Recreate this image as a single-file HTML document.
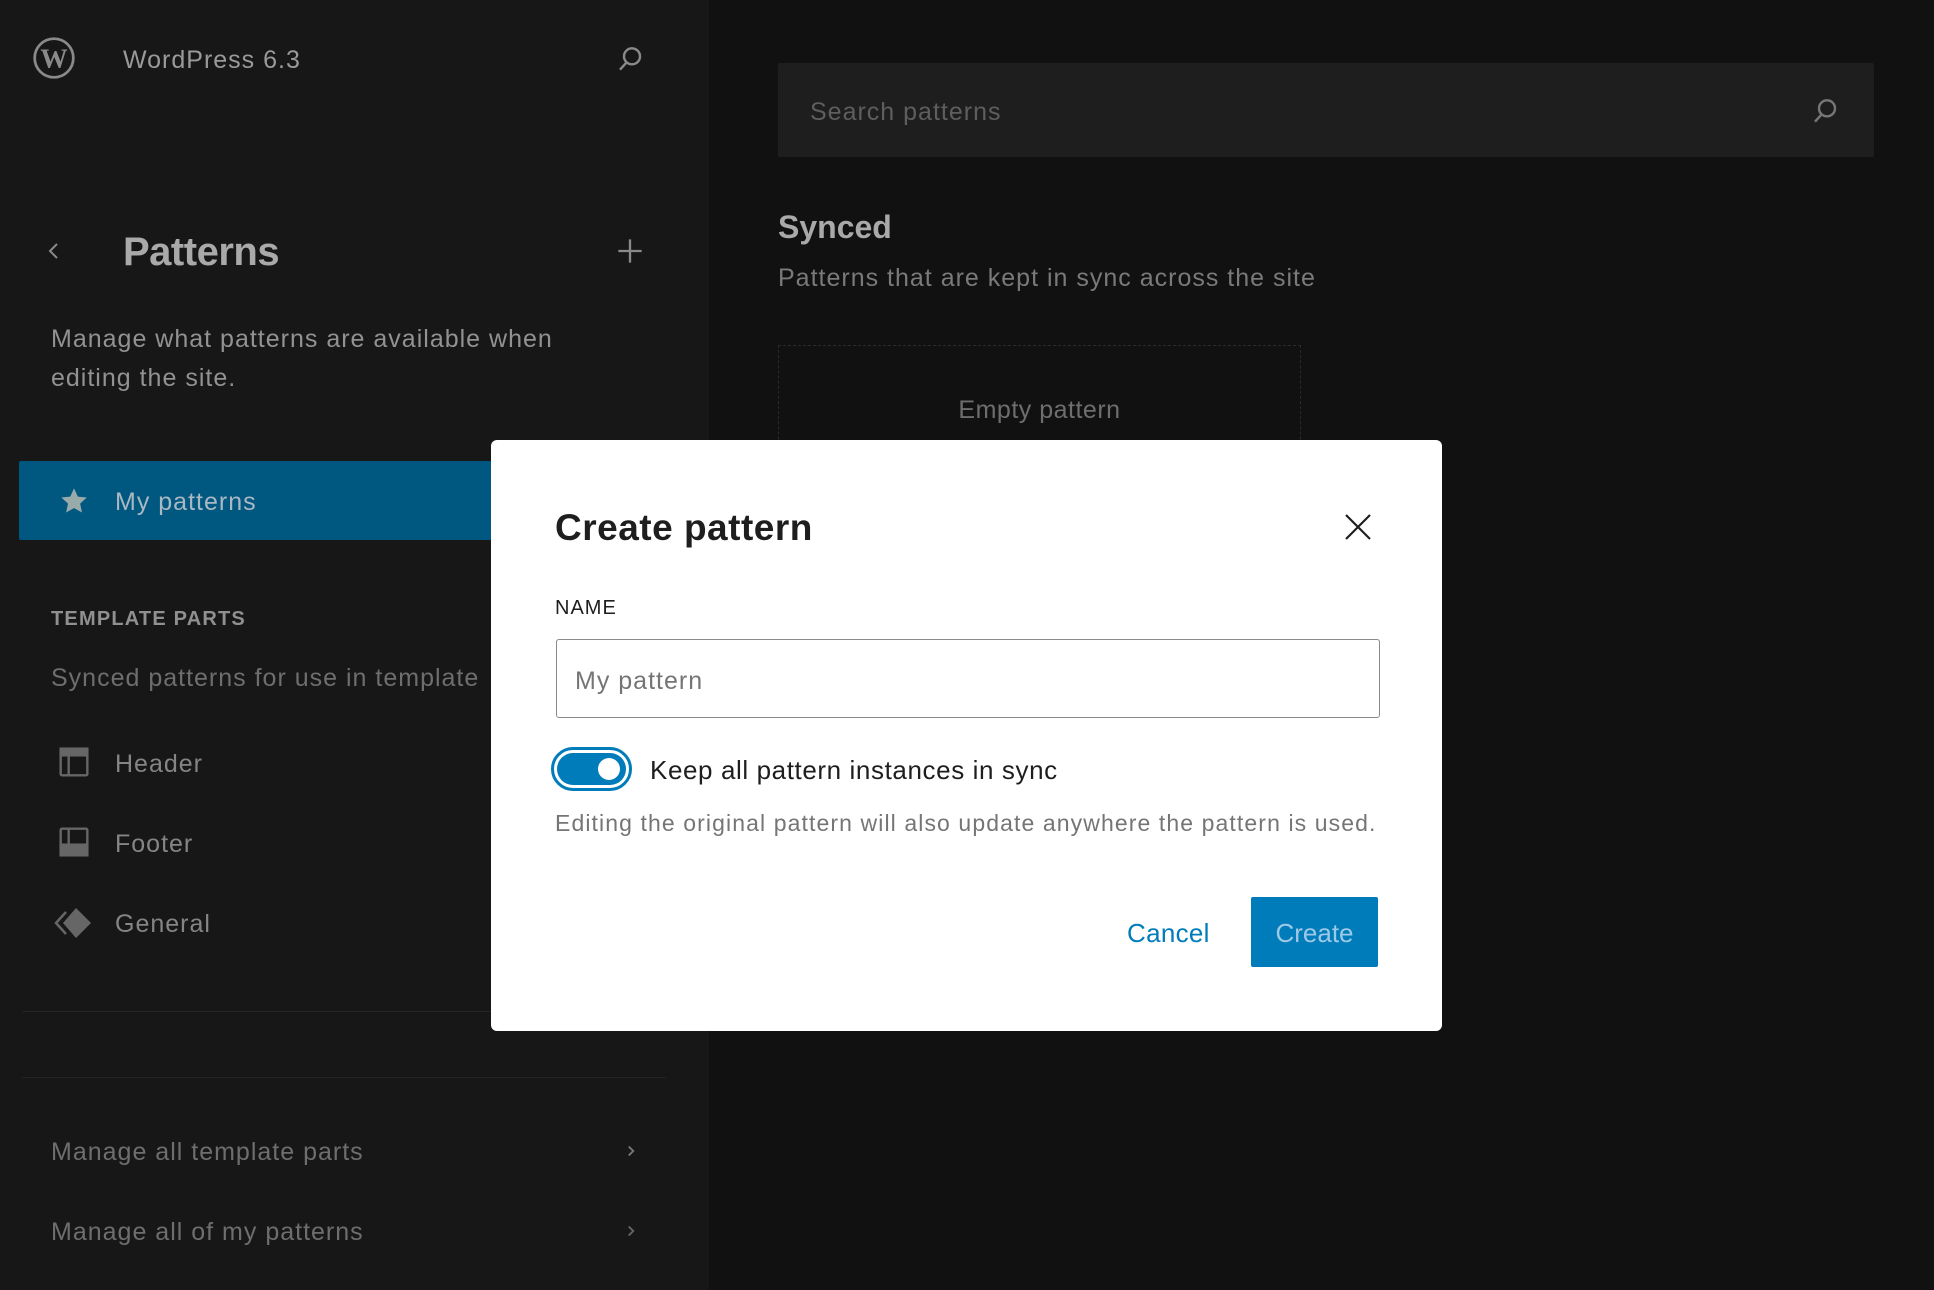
<!DOCTYPE html>
<html><head><meta charset="utf-8"><style>
*{margin:0;padding:0;box-sizing:border-box}
body{width:1934px;height:1290px;overflow:hidden;background:#111;font-family:"Liberation Sans",sans-serif;position:relative}
.a{position:absolute;white-space:nowrap}
.s{letter-spacing:1px}
.side{position:absolute;left:0;top:0;width:709px;height:1290px;background:#171717}
</style></head><body>
<div class="side"></div>
<svg class="a" style="left:33px;top:37px" width="42" height="42" viewBox="0 0 20 20"><circle cx="10" cy="10" r="9.2" fill="none" stroke="#8a8a8a" stroke-width="1.3"/><text x="10" y="14.6" font-family="Liberation Serif" font-size="13" font-weight="bold" fill="#8a8a8a" text-anchor="middle">W</text></svg>
<div class="a s" style="left:123px;top:46px;font-size:25px;color:#9a9a9a">WordPress 6.3</div>
<svg class="a" style="left:614px;top:43px" width="32" height="32" viewBox="0 0 24 24" fill="none" stroke="#8a8a8a" stroke-width="1.8"><circle cx="13.5" cy="10" r="6"/><path d="M9.5 14.5 4.5 20"/></svg>

<div class="a" style="left:778px;top:63px;width:1096px;height:94px;background:#1e1e1e;border-radius:2px"></div>
<div class="a s" style="left:810px;top:98px;font-size:25px;color:#5e5e5e">Search patterns</div>
<svg class="a" style="left:1809px;top:95px" width="32" height="32" viewBox="0 0 24 24" fill="none" stroke="#777" stroke-width="1.8"><circle cx="13.5" cy="10" r="6"/><path d="M9.5 14.5 4.5 20"/></svg>

<div class="a" style="left:778px;top:209px;font-size:32px;font-weight:bold;color:#a9a9a9">Synced</div>
<div class="a s" style="left:778px;top:264px;font-size:25px;color:#7a7a7a">Patterns that are kept in sync across the site</div>
<div class="a" style="left:778px;top:345px;width:523px;height:120px;border:1px dashed #2a2a2a;border-bottom:none"></div>
<div class="a" style="left:778px;top:396px;width:523px;text-align:center;font-size:25px;color:#6e6e6e;letter-spacing:.5px">Empty pattern</div>

<svg class="a" style="left:42px;top:239px" width="24" height="24" viewBox="0 0 24 24" fill="none" stroke="#8a8a8a" stroke-width="2"><path d="M15 5 8 12l7 7"/></svg>
<div class="a" style="left:123px;top:230px;font-size:40px;font-weight:bold;color:#a9a9a9;letter-spacing:-.5px">Patterns</div>
<svg class="a" style="left:616px;top:237px" width="28" height="28" viewBox="0 0 24 24" fill="none" stroke="#8a8a8a" stroke-width="2"><path d="M12 2v20M2 12h20"/></svg>
<div class="a s" style="left:51px;top:320px;font-size:25px;line-height:39px;color:#929292">Manage what patterns are available when<br>editing the site.</div>

<div class="a" style="left:19px;top:461px;width:520px;height:79px;background:#00577f;border-radius:2px"></div>
<svg class="a" style="left:58px;top:485px" width="32" height="32" viewBox="0 0 24 24"><path d="M12 2.5l2.9 6.2 6.7.7-5 4.6 1.4 6.6L12 17.3l-5.9 3.3 1.4-6.6-5-4.6 6.7-.7z" fill="#9aa"/></svg>
<div class="a s" style="left:115px;top:488px;font-size:25px;color:#a9b8c2">My patterns</div>

<div class="a" style="left:51px;top:608px;font-size:20px;font-weight:bold;color:#909090;letter-spacing:1.2px">TEMPLATE PARTS</div>
<div class="a s" style="left:51px;top:664px;font-size:25px;color:#6e6e6e">Synced patterns for use in template</div>

<svg class="a" style="left:58px;top:746px" width="32" height="32" viewBox="0 0 24 24" fill="none" stroke="#666" stroke-width="1.8"><rect x="2" y="2" width="20" height="20" rx="1"/><path d="M2 7h20M8 7v15" /><rect x="2" y="2" width="20" height="5" fill="#666"/></svg>
<div class="a s" style="left:115px;top:750px;font-size:25px;color:#858585">Header</div>
<svg class="a" style="left:58px;top:826px" width="32" height="32" viewBox="0 0 24 24" fill="none" stroke="#666" stroke-width="1.8"><rect x="2" y="2" width="20" height="20" rx="1"/><path d="M8 2v12"/><rect x="2" y="14" width="20" height="8" fill="#666"/></svg>
<div class="a s" style="left:115px;top:830px;font-size:25px;color:#858585">Footer</div>
<svg class="a" style="left:54px;top:906px" width="40" height="34" viewBox="0 0 40 34"><path d="M22 2 37 17 22 32 9 17z" fill="#666"/><path d="M12 6 2 17l10 11" fill="none" stroke="#666" stroke-width="2.5"/></svg>
<div class="a s" style="left:115px;top:910px;font-size:25px;color:#858585">General</div>

<div class="a" style="left:22px;top:1011px;width:644px;height:1px;background:#242424"></div>
<div class="a" style="left:22px;top:1077px;width:644px;height:1px;background:#242424"></div>
<div class="a s" style="left:51px;top:1138px;font-size:25px;color:#6e6e6e">Manage all template parts</div>
<svg class="a" style="left:622px;top:1141px" width="18" height="20" viewBox="0 0 24 24" fill="none" stroke="#777" stroke-width="2.5"><path d="M9 6l6 6-6 6"/></svg>
<div class="a s" style="left:51px;top:1218px;font-size:25px;color:#6e6e6e">Manage all of my patterns</div>
<svg class="a" style="left:622px;top:1221px" width="18" height="20" viewBox="0 0 24 24" fill="none" stroke="#666" stroke-width="2.5"><path d="M9 6l6 6-6 6"/></svg>

<div class="a" style="left:491px;top:440px;width:951px;height:591px;background:#fff;border-radius:6px"></div>
<div class="a" style="left:555px;top:507px;font-size:37px;font-weight:bold;color:#1e1e1e;letter-spacing:.5px">Create pattern</div>
<svg class="a" style="left:1342px;top:511px" width="32" height="32" viewBox="0 0 24 24" fill="none" stroke="#1e1e1e" stroke-width="1.6"><path d="M3 3l18 18M21 3 3 21"/></svg>
<div class="a" style="left:555px;top:597px;font-size:20px;font-weight:500;color:#1e1e1e;letter-spacing:1px">NAME</div>
<div class="a" style="left:556px;top:639px;width:824px;height:79px;border:1.5px solid #8a8a8a;border-radius:3px"></div>
<div class="a s" style="left:575px;top:667px;font-size:25px;color:#757575">My pattern</div>
<div class="a" style="left:551px;top:747px;width:81px;height:44px;border:3px solid #007cba;border-radius:22px;padding:3px"><div style="width:100%;height:100%;background:#007cba;border-radius:16px;position:relative"><div style="position:absolute;right:6px;top:5px;width:22px;height:22px;border-radius:50%;background:#fff"></div></div></div>
<div class="a" style="left:650px;top:755px;font-size:26px;color:#1e1e1e;letter-spacing:.6px">Keep all pattern instances in sync</div>
<div class="a" style="left:555px;top:810px;font-size:23px;color:#757575;letter-spacing:1.1px">Editing the original pattern will also update anywhere the pattern is used.</div>
<div class="a" style="left:1127px;top:918px;font-size:26px;color:#007cba;letter-spacing:.3px">Cancel</div>
<div class="a" style="left:1251px;top:897px;width:127px;height:70px;background:#007cba;border-radius:2px;color:#9dc9e6;font-size:26px;text-align:center;line-height:72px">Create</div>
</body></html>
